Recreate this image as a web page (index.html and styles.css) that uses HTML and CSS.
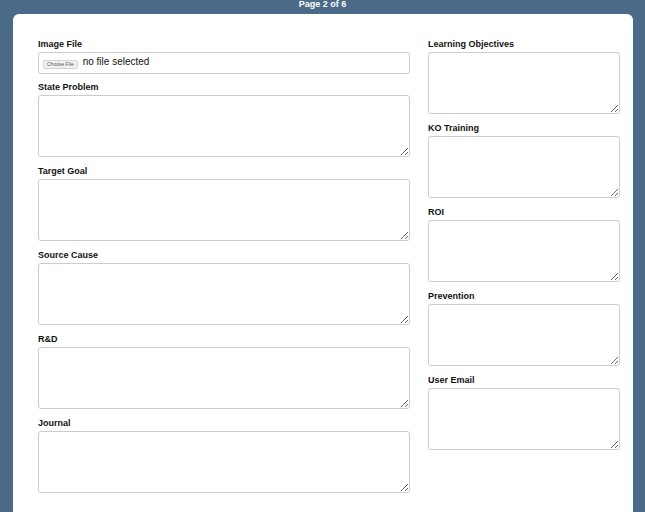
FILE: index.html
```html
<!DOCTYPE html>
<html lang="en">
<head>
  <meta charset="UTF-8" />
  <meta name="viewport" content="width=device-width, initial-scale=1.0" />
  <title>Report Wizard - Page 2 of 6</title>
  <link rel="stylesheet" href="styles.css">
</head>
<body>

  <div class="page-title">Page 2 of 6</div>

  <form class="card">
    <div class="col">
      <div class="field">
        <label>Image File</label>
        <div class="file-box">
          <button type="button" class="choose">Choose File</button>
          <span class="file-name">no file selected</span>
        </div>
      </div>
      <div class="field">
        <label for="problem">State Problem</label>
        <textarea id="problem"></textarea>
      </div>
      <div class="field">
        <label for="goal">Target Goal</label>
        <textarea id="goal"></textarea>
      </div>
      <div class="field">
        <label for="cause">Source Cause</label>
        <textarea id="cause"></textarea>
      </div>
      <div class="field">
        <label for="rnd">R&amp;D</label>
        <textarea id="rnd"></textarea>
      </div>
      <div class="field">
        <label for="journal">Journal</label>
        <textarea id="journal"></textarea>
      </div>
    </div>

    <div class="col">
      <div class="field">
        <label for="objectives">Learning Objectives</label>
        <textarea id="objectives"></textarea>
      </div>
      <div class="field">
        <label for="ko">KO Training</label>
        <textarea id="ko"></textarea>
      </div>
      <div class="field">
        <label for="roi">ROI</label>
        <textarea id="roi"></textarea>
      </div>
      <div class="field">
        <label for="prevention">Prevention</label>
        <textarea id="prevention"></textarea>
      </div>
      <div class="field">
        <label for="email">User Email</label>
        <textarea id="email"></textarea>
      </div>
    </div>
  </form>

</body>
</html>
```

FILE: styles.css
```css
* {
  margin: 0;
  padding: 0;
  box-sizing: border-box;
}
body {
  font-family: 'Liberation Sans', Arial, sans-serif;
  background-color: #4b6a88;
  color: #111;
  overflow: hidden;
}
.page-title {
  color: white;
  font-size: 9px;
  font-weight: bold;
  line-height: 9px;
  text-align: center;
  margin-bottom: 5px;
}
.card {
  background-color: white;
  margin: 0 12px 0 13px;
  border-radius: 6px;
  padding: 25px 13px 40px 25px;
  display: grid;
  grid-template-columns: 372px 192px;
  column-gap: 18px;
  align-items: start;
}
.field label {
  display: block;
  font-size: 9px;
  font-weight: bold;
  line-height: 11px;
  margin-bottom: 2px;
}
.field textarea {
  display: block;
  width: 100%;
  height: 62px;
  border: 1px solid #cccccc;
  border-radius: 3px;
  padding: 4px;
  font-family: inherit;
  margin-bottom: 9px;
  background: white;
}
.file-box {
  display: flex;
  align-items: center;
  height: 22px;
  border: 1px solid #cccccc;
  border-radius: 3px;
  padding: 0 4px;
  margin-bottom: 8px;
}
.file-box .choose {
  font-family: inherit;
  font-size: 5px;
  line-height: 5px;
  color: #555;
  background: #f1f1f1;
  border: 1px solid #d4d4d4;
  border-radius: 2px;
  padding: 1px 3px;
  margin-right: 5px;
  margin-top: 2px;
}
.file-box .file-name {
  font-size: 10px;
  color: #111;
  margin-bottom: 3px;
}
```
